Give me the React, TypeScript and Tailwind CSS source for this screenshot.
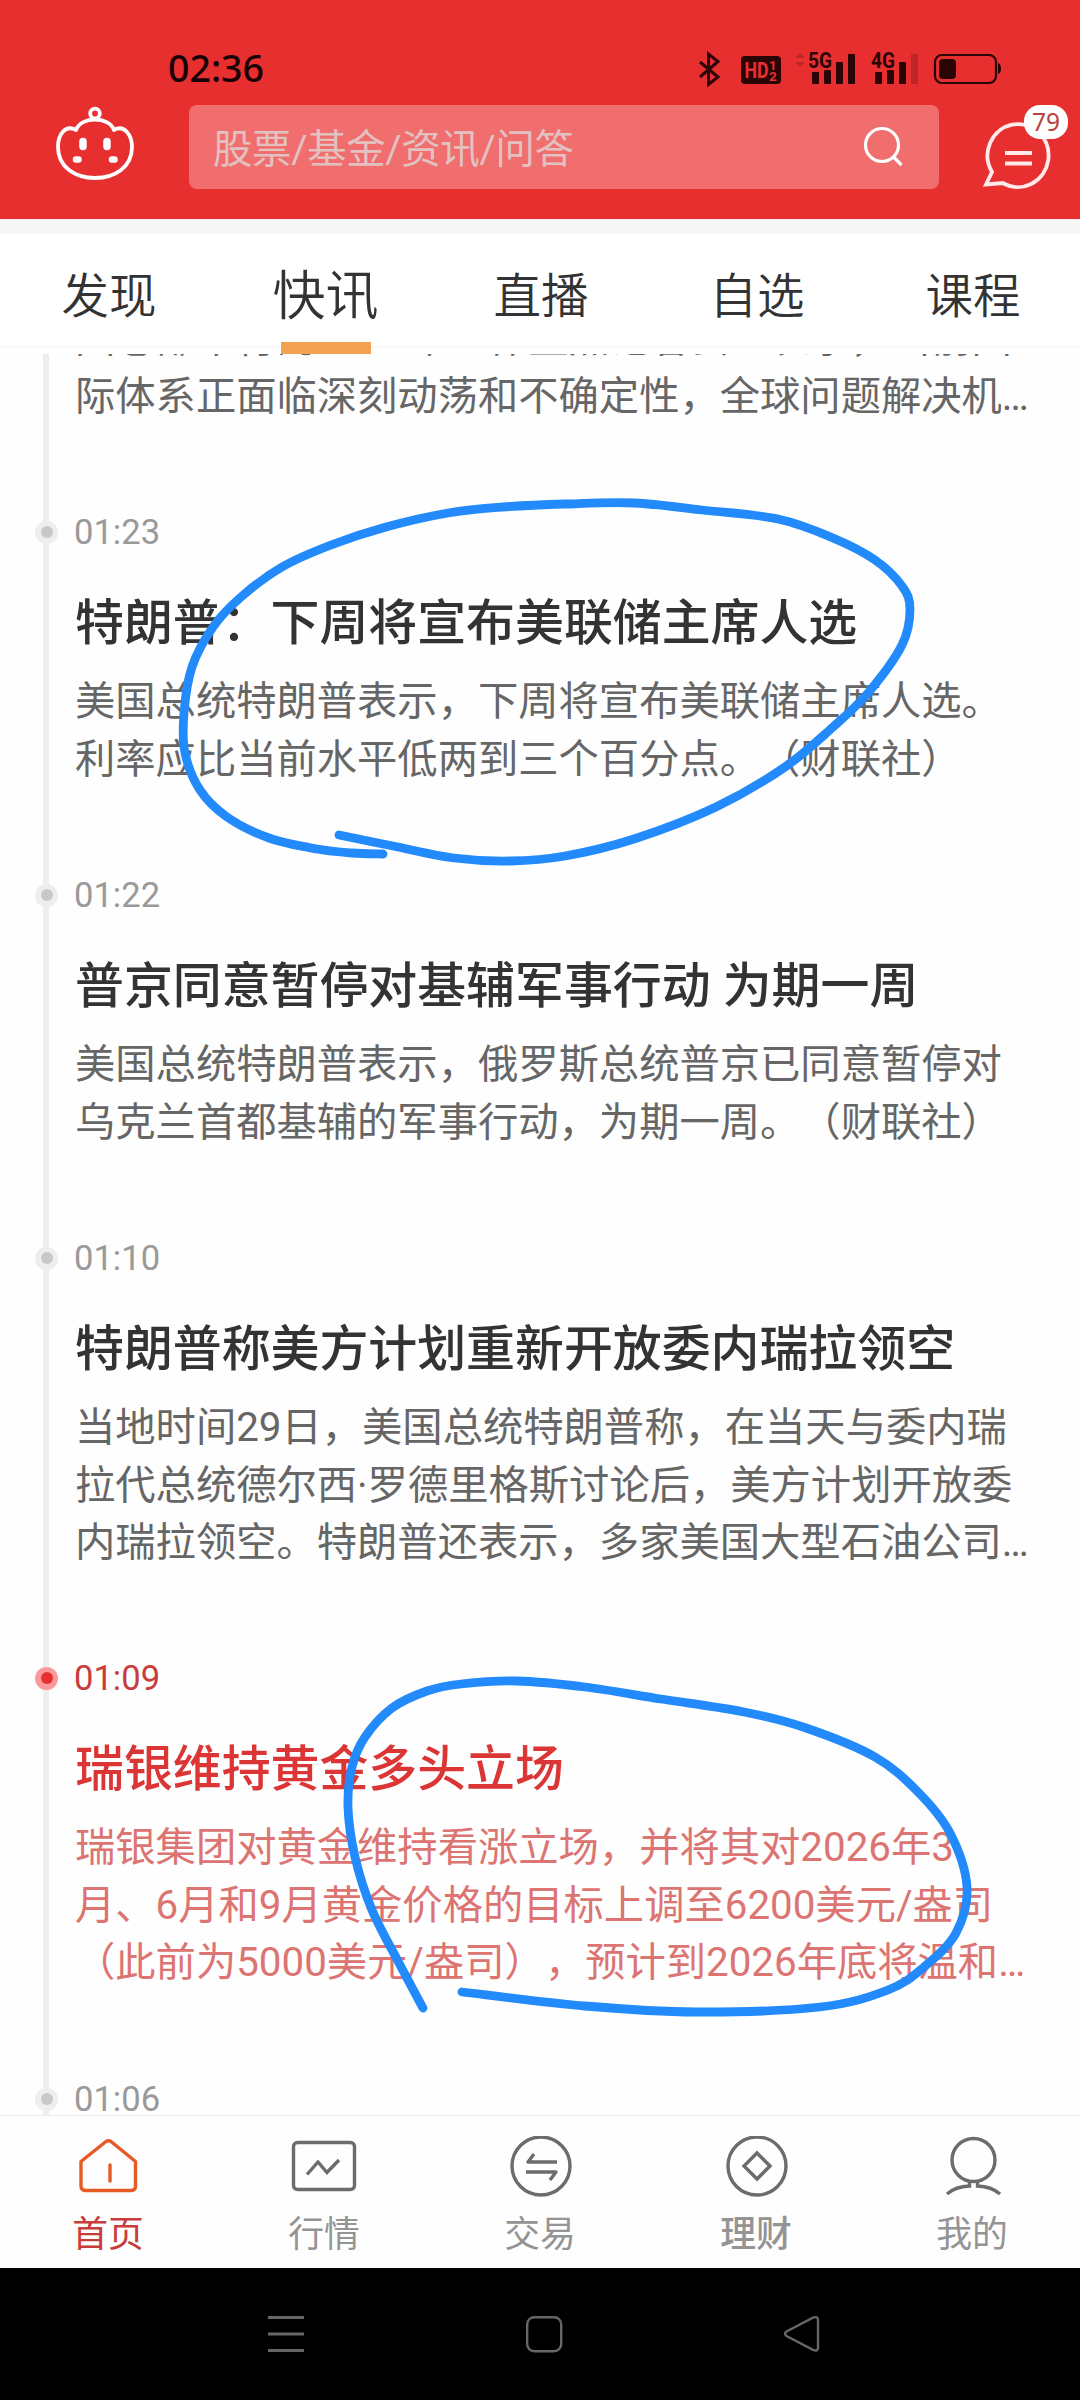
import React from "react";

type Pt = [number, number];

const smooth = (p: Pt[]) => {
  let d = `M${p[0][0]} ${p[0][1]}`;
  for (let i = 0; i < p.length - 1; i++) {
    const a = p[i - 1] || p[i];
    const b = p[i];
    const c = p[i + 1];
    const e = p[i + 2] || c;
    d += `C${b[0] + (c[0] - a[0]) / 6} ${b[1] + (c[1] - a[1]) / 6} ${c[0] - (e[0] - b[0]) / 6} ${c[1] - (e[1] - b[1]) / 6} ${c[0]} ${c[1]}`;
  }
  return d;
};

const strokeA: Pt[] = [[383, 854], [352, 853], [317, 849], [269, 838], [227, 817], [200, 790], [185, 753], [184, 713], [192, 667], [213, 627], [241, 597], [282, 567], [331, 545], [386, 527], [448, 513], [503, 507], [565, 504], [634, 503], [702, 510], [778, 519], [833, 538], [875, 560], [902, 586], [910, 609], [902, 645], [868, 693], [833, 727], [785, 767], [716, 807], [634, 839], [565, 856], [510, 861], [454, 858], [393, 846], [339, 835]];
const strokeB: Pt[] = [[423, 2008], [399, 1963], [372, 1910], [355, 1857], [348, 1807], [352, 1767], [365, 1737], [392, 1708], [427, 1691], [461, 1684], [516, 1681], [585, 1687], [661, 1699], [744, 1712], [806, 1728], [875, 1757], [918, 1792], [950, 1833], [967, 1887], [956, 1933], [924, 1967], [888, 1990], [820, 2007], [696, 2012], [585, 2006], [462, 1992]];

type Item = { time: string; title: string; lines: string[]; hot?: boolean; height: string };

const items: Item[] = [
  { time: "01:23", title: "特朗普：下周将宣布美联储主席人选", lines: ["美国总统特朗普表示，下周将宣布美联储主席人选。", "利率应比当前水平低两到三个百分点。（财联社）"], height: "h-[363px]" },
  { time: "01:22", title: "普京同意暂停对基辅军事行动 为期一周", lines: ["美国总统特朗普表示，俄罗斯总统普京已同意暂停对", "乌克兰首都基辅的军事行动，为期一周。（财联社）"], height: "h-[363px]" },
  { time: "01:10", title: "特朗普称美方计划重新开放委内瑞拉领空", lines: ["当地时间29日，美国总统特朗普称，在当天与委内瑞", "拉代总统德尔西·罗德里格斯讨论后，美方计划开放委", "内瑞拉领空。特朗普还表示，多家美国大型石油公司…"], height: "h-[420px]" },
  { time: "01:09", title: "瑞银维持黄金多头立场", lines: ["瑞银集团对黄金维持看涨立场，并将其对2026年3", "月、6月和9月黄金价格的目标上调至6200美元/盎司", "（此前为5000美元/盎司），预计到2026年底将温和…"], hot: true, height: "h-[421px]" },
  { time: "01:06", title: "", lines: [], height: "h-[363px]" },
];

const tabs = ["发现", "快讯", "直播", "自选", "课程"];

function Lines({ lines, hot }: { lines: string[]; hot?: boolean }) {
  return (
    <div className={`text-[40.3px] leading-[57.6px] whitespace-pre ${hot ? "text-[#dc7472]" : "text-[#666]"}`}>
      {lines.map((l) => (
        <div key={l}>{l}</div>
      ))}
    </div>
  );
}

function NewsItem({ item }: { item: Item }) {
  return (
    <article className={`${item.height} shrink-0 pl-[75px]`}>
      <div className="-ml-10 flex h-[46px] items-center">
        <span className={`flex size-[23px] items-center justify-center rounded-full ${item.hot ? "bg-[#fb9a9a]" : "bg-[#eee]"}`}>
          <span className={`size-3 rounded-full ${item.hot ? "bg-[#e82f30]" : "bg-[#c8c8c8]"}`} />
        </span>
        <time className={`ml-4 text-[34.600px] leading-none ${item.hot ? "text-[#c93c3c]" : "text-[#999]"}`}>{item.time}</time>
      </div>
      <h2 className={`mt-[33px] h-[72px] whitespace-pre text-[48.900px] leading-[72px] font-medium ${item.hot ? "text-[#dc3535]" : "text-[#333]"}`}>{item.title}</h2>
      <div className="mt-[13px]">
        <Lines lines={item.lines} hot={item.hot} />
      </div>
    </article>
  );
}

function StatusIcons() {
  return (
    <svg width="310" height="40" viewBox="695 50 310 40" className="text-[#2b0506]" fill="currentColor">
      <path d="M700 62L718 77L708.500 84.500V54L718 61.500L700 77" fill="none" stroke="currentColor" strokeWidth="3" />
      <rect x="741" y="56" width="40" height="28" rx="4" />
      <text x="744.500" y="78" fontSize="22" fontWeight="700" fill="#e82f30" textLength="24" lengthAdjust="spacingAndGlyphs">HD</text>
      <text x="769" y="69.500" fontSize="13" fontWeight="700" fill="#e82f30">1</text>
      <text x="769" y="81" fontSize="13.500" fontWeight="700" fill="#e82f30">2</text>
      <path d="M795 58l5-5 5 5zM795 62h10l-5 5z" opacity=".22" />
      <text x="808" y="67.500" fontSize="22" fontWeight="700" textLength="24" lengthAdjust="spacingAndGlyphs">5G</text>
      <rect x="812" y="72" width="7" height="12" rx="1" />
      <rect x="824" y="70" width="7" height="14" rx="1" />
      <rect x="836" y="62" width="7" height="22" rx="1" />
      <rect x="848" y="54" width="7" height="30" rx="1" />
      <text x="871" y="67.500" fontSize="22" fontWeight="700" textLength="24" lengthAdjust="spacingAndGlyphs">4G</text>
      <rect x="875" y="72" width="7" height="12" rx="1" />
      <rect x="887" y="70" width="7" height="14" rx="1" />
      <rect x="899" y="62" width="7" height="22" rx="1" />
      <rect x="911" y="54" width="7" height="30" rx="1" opacity=".22" />
      <rect x="935" y="55" width="61" height="28" rx="7" fill="none" stroke="currentColor" strokeWidth="2.200" />
      <rect x="939" y="59" width="17" height="20" rx="4" />
      <path d="M998 63q3 1 3 5.500t-3 5.500z" />
    </svg>
  );
}

function Header() {
  return (
    <header className="h-[219px] shrink-0 bg-[#e82f30]">
      <div className="flex h-[105px] items-start justify-between pr-[75px] pl-[168px]">
        <span className="mt-[48px] font-['Noto_Sans'] text-[37.500px] leading-10 font-medium text-[#180203]">02:36</span>
        <div className="mt-[50px]">
          <StatusIcons />
        </div>
      </div>
      <div className="flex items-start">
        <svg width="84" height="80" viewBox="53 105 84 80" className="ml-[53px] shrink-0" fill="none" stroke="#fff" strokeWidth="3.800">
          <circle cx="95" cy="113.500" r="4.800" />
          <path d="M76 130C81 116 109 116 114 130C124 124 132 135 132 147C132 167 115 178 95 178S58 167 58 147C58 135 65 124 76 130Z" strokeLinejoin="round" />
          <path d="M83 141.500v5M107 141.500v5" strokeWidth="7.500" strokeLinecap="round" />
          <path d="M76 159.500h2.500M112 159.500h2.500" strokeWidth="6.500" strokeLinecap="round" />
        </svg>
        <div className="ml-[52px] flex h-[84px] w-[750px] items-center justify-between rounded-lg bg-[#f06e6e] pr-[34px] pl-[24px]">
          <span className="mt-1.5 text-[39.400px] leading-none tracking-[-0.3px] text-[#e3c1c1]">股票/基金/资讯/问答</span>
          <svg width="42" height="42" viewBox="863 126 42 42" fill="none" stroke="#fff" strokeWidth="3.200">
            <circle cx="882" cy="145" r="16.500" />
            <path d="M893 156.500L901.500 165" />
          </svg>
        </div>
        <div className="relative ml-[43px] h-[88px] w-[90px]">
          <svg width="90" height="88" viewBox="982 105 90 88" fill="none" stroke="#ffe9e9" strokeWidth="3.800">
            <path d="M992 172A30.500 31.500 0 1 1 1003 183L986 184.500Z" />
            <path d="M1005 153h27M1005 163.500h27" />
          </svg>
          <span className="absolute top-0 left-[42px] flex h-[34px] w-11 items-center justify-center rounded-2xl bg-white font-['Noto_Sans'] text-[24.500px] leading-none text-[#bb4040]">79</span>
        </div>
      </div>
    </header>
  );
}

function TabBar() {
  return (
    <>
      <div className="h-[15px] shrink-0 border-t border-[#fde8e8] bg-[#f7f7f7]" />
      <nav className="grid h-[120px] shrink-0 grid-cols-5 bg-linear-to-b from-white from-[112px] via-[#f5f5f5] via-[112px] to-white to-[115px] text-[#333]">
        {tabs.map((t) =>
          t === "快讯" ? (
            <div key={t} className="flex flex-col items-center justify-between pl-[3px]">
              <span className="mt-[23px] text-[53px] leading-[80px] font-[350]">{t}</span>
              <span className="h-3 w-[90px] bg-[#f1a14f]" />
            </div>
          ) : (
            <div key={t} className="pt-[23px] pl-[2px] text-center text-[47.500px] leading-[80px] font-[350]">
              {t}
            </div>
          ),
        )}
      </nav>
    </>
  );
}

const navItems = [
  {
    label: "首页",
    cls: "text-[#c83c3c]",
    icon: (
      <g stroke="#e65a26" strokeLinejoin="round" transform="translate(2 0)">
        <path d="M32 5.500Q34.500 4 37 5.500L61.500 25.500V50Q61.500 54.500 57 54.500H12Q7 54.500 7 50V25.500Z" />
        <path d="M36 29V45" strokeLinecap="round" />
      </g>
    ),
  },
  { label: "行情", cls: "text-[#949494]", icon: <g><rect x="5.500" y="6.500" width="61" height="47" rx="4" /><path d="M19 38.500L30 26 39 36.500 51 24" /></g> },
  { label: "交易", cls: "text-[#949494]", icon: <g><circle cx="37" cy="30" r="29" /><path d="M53 26H24L30 18M22 36H52L46 44" strokeLinejoin="round" /></g> },
  { label: "理财", cls: "text-[#949494] font-medium", icon: <g><circle cx="37" cy="30" r="29" /><path d="M37 17L50 30 37 43 24 30Z" /></g> },
  { label: "我的", cls: "text-[#949494]", icon: <g><circle cx="37.500" cy="24" r="21.500" /><path d="M11 58Q19.500 50.500 33.500 50V45M64 58Q55.500 50.500 41.500 50V45" /></g> },
];

function BottomNav() {
  return (
    <nav className="grid h-[153px] shrink-0 grid-cols-5 border-t border-[#ececec] bg-[#fefefe]">
      {navItems.map((n) => (
        <div key={n.label} className="flex flex-col items-center">
          <svg width="72" height="62" viewBox="0 0 72 62" className="mt-5 shrink-0" fill="none" stroke="#6c6c6c" strokeWidth="3.400">
            {n.icon}
          </svg>
          <span className={`mt-2.5 text-[35.800px] leading-[54px] ${n.cls}`}>{n.label}</span>
        </div>
      ))}
    </nav>
  );
}

function SystemNav() {
  return (
    <div className="flex flex-1 bg-black pt-12 pl-[268px]">
      <svg width="36" height="37" viewBox="0 0 36 37" stroke="#666" strokeWidth="3">
        <path d="M0 1.500h36M0 18h36M0 34.500h36" />
      </svg>
      <svg width="37" height="37" viewBox="0 0 37 37" fill="none" stroke="#666" strokeWidth="2.400" className="ml-[222px]">
        <rect x="1.200" y="1.200" width="34" height="34" rx="7" />
      </svg>
      <svg width="37" height="37" viewBox="0 0 37 37" fill="none" stroke="#666" strokeWidth="2.400" className="ml-[221px]">
        <path d="M2.500 15.500L29 1.600Q34 0 34 4V31.500Q34 36 29 33.800L2.500 20Q-.5 17.800 2.500 15.500Z" />
      </svg>
    </div>
  );
}

export default function App() {
  return (
    <div className="relative flex h-[2400px] w-[1080px] flex-col overflow-hidden bg-[#fefefe] font-[Roboto,'Noto_Sans_CJK_SC',sans-serif] [text-spacing-trim:space-all]">
      <Header />
      <TabBar />
      <main className="relative flex h-[1761px] shrink-0 flex-col overflow-hidden">
        <div className="absolute inset-y-0 left-[43px] w-1.5 bg-[#eee]" />
        <div className="relative flex flex-col">
          <div className="-mt-[44px] h-[199px] shrink-0 pl-[75px]">
            <Lines lines={["国总部举行的2026年工作重点记者会上表示，当前国", "际体系正面临深刻动荡和不确定性，全球问题解决机…"]} />
          </div>
          {items.map((i) => (
            <NewsItem key={i.time} item={i} />
          ))}
        </div>
      </main>
      <BottomNav />
      <SystemNav />
      <svg className="pointer-events-none absolute inset-0" width="1080" height="2400" viewBox="0 0 1080 2400" fill="none" stroke="#228afb" strokeWidth="8.800" strokeLinecap="round" strokeLinejoin="round">
        <path d={smooth(strokeA)} />
        <path d={smooth(strokeB)} />
      </svg>
    </div>
  );
}
